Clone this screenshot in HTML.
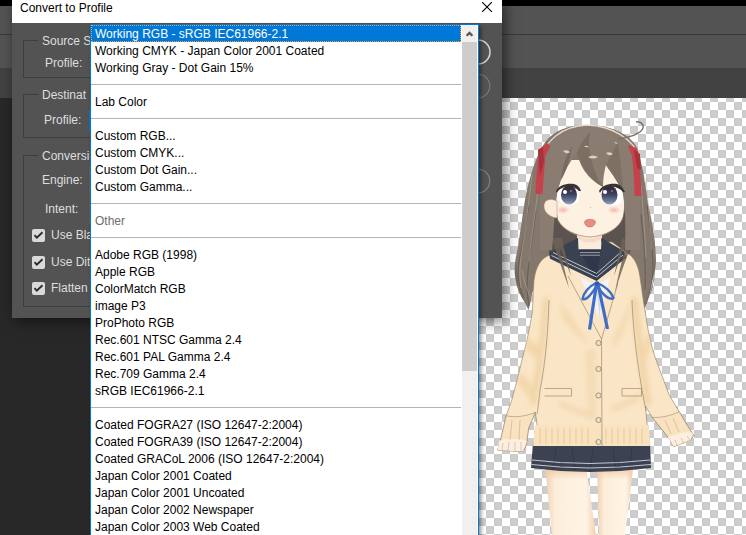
<!DOCTYPE html>
<html><head><meta charset="utf-8">
<style>
*{margin:0;padding:0;box-sizing:border-box}
html,body{width:746px;height:535px;overflow:hidden;background:#282828;font-family:"Liberation Sans",sans-serif}
.a{position:absolute}
#topblk{left:0;top:0;width:746px;height:6px;background:#000}
#bar1{left:0;top:6px;width:746px;height:28px;background:#535353}
#bar1l{left:0;top:34px;width:746px;height:1px;background:#393939}
#bar2{left:0;top:35px;width:746px;height:33px;background:#535353}
#bar3l{left:0;top:68px;width:12px;height:30px;background:#424242}
#bar3r{left:502px;top:68px;width:244px;height:30px;background:#424242}
#canvas{left:478px;top:98px;width:268px;height:437px;background:conic-gradient(#fff 25%,#ccc 0 50%,#fff 0 75%,#ccc 0) 32px 4px/16px 16px}
#dlg{left:12px;top:0;width:490px;height:318px;background:#535353;box-shadow:3px 3px 12px rgba(0,0,0,.55)}
#title{left:0;top:0;width:490px;height:23px;background:#fff}
#title span{position:absolute;left:8px;top:1px;font-size:12px;color:#000;white-space:pre}
.grp{position:absolute;border:1px solid #3e3e3e}
.lbl{position:absolute;font-size:12px;color:#dedede;white-space:pre}
.cb{position:absolute;width:13px;height:13px;background:#d9d9d9;border-radius:2px}
.cb svg{position:absolute;left:0;top:0}
#list{left:90px;top:24px;width:389px;height:520px;background:#fff;border:1px solid #0078d7;box-shadow:2px 2px 4px rgba(0,0,0,.45)}
.it{position:absolute;left:4px;height:17px;font-size:12px;line-height:17px;padding-top:1px;color:#000;white-space:pre}
.sep{position:absolute;left:0;width:370px;height:1px;background:#b4b4b4}
#hl{position:absolute;left:0;top:0;width:370px;height:17px;background:#0078d7}
#sb{position:absolute;left:371px;top:0;width:15px;height:520px;background:#f0f0f0}
#thumb{position:absolute;left:0;top:17px;width:15px;height:329px;background:#cdcdcd}
</style></head><body>
<div class="a" id="topblk"></div>
<div class="a" id="bar1"></div>
<div class="a" id="bar1l"></div>
<div class="a" id="bar2"></div>
<div class="a" id="bar3l"></div>
<div class="a" id="bar3r"></div>
<div class="a" id="canvas"></div>
<!--CHAR-->
<svg class="a" style="left:0;top:0" width="746" height="535" viewBox="0 0 746 535">
<defs>
 <linearGradient id="gEye" x1="0" y1="0" x2="0" y2="1"><stop offset="0" stop-color="#262838"/><stop offset="0.45" stop-color="#3a4058"/><stop offset="0.8" stop-color="#6a7898"/><stop offset="1" stop-color="#9aa8c8"/></linearGradient>
 <linearGradient id="gLeg" x1="0" x2="1"><stop offset="0" stop-color="#f0cfae"/><stop offset="0.2" stop-color="#fdeedb"/><stop offset="0.8" stop-color="#fef3e4"/><stop offset="1" stop-color="#f2d2b2"/></linearGradient>
 <linearGradient id="gLeg2" x1="0" y1="0" x2="0" y2="1"><stop offset="0" stop-color="#efc9a5" stop-opacity=".9"/><stop offset="1" stop-color="#efc9a5" stop-opacity="0"/></linearGradient>
 <clipPath id="cardClip"><path d="M550 255 C541 258 536 266 534 280 C533 295 533 305 532 314 C530 325 528 337 525.3 347 C522 360 519 372 516.9 381 C515 388 513 395 511.8 400 L506.2 415.7 L499.5 444.8 L497.8 450 L523 451.6 L526.4 444.8 L528.6 428 L535.4 412.3 L537 425 L533.7 444.7 L649.5 444.7 L646.7 420 L645.6 406.2 L652.3 417.4 L661.3 428.6 L670.3 439.9 L673.6 446.6 L690.5 439.9 L693.8 435.4 L687.1 425.3 L679.3 411.8 L669.2 395 L664 381 C658 365 654 355 652 347 C649 335 647 325 645.5 313.6 C643 300 642 290 640.4 280 C639 268 636 260 630 255 L612 242 L572 242 Z"/></clipPath>
 <filter id="blur3" x="-20%" y="-20%" width="140%" height="140%"><feGaussianBlur stdDeviation="2.5"/></filter>
 <radialGradient id="gBl"><stop offset="0" stop-color="#f4aaa8" stop-opacity=".85"/><stop offset="1" stop-color="#f4aaa8" stop-opacity="0"/></radialGradient>
</defs>
<!-- back hair / twin tails -->
<path d="M586 125 C568 125 554 131 546 141 C538 152 531 170 525 200 C523 212 522 220 521.8 222 C520 232 519 240 518.4 245 C517 252 515.5 258 515 263 C514.5 268 514.5 272 515 276 C516 282 517 286 518.4 289.5 C520 294 522 298 524 301 C526 305 527.5 308 528.5 310 C530 305 531 300 532 294 L540 270 L552 262 L575 250 L604 250 L628 262 L638 268 L640 281 L640 300 C642 304 644 307 645 308.5 C646 305 646.5 303 647 302 C649 295 651 288 652 281.6 C654 274 656 266 656 261 C656 254 655 246 654.8 241 C653 228 651 216 648.7 207.4 C647 195 645 184 643.6 173.7 C641 162 639 152 636 146 C628 133 610 125 586 125 Z" fill="#84786d"/>
<path d="M556 212 C558 225 566 232 578 236 L578 250 L552 262 L546 240 Z M624 210 C620 224 612 232 602 236 L602 250 L628 262 L633 238 Z" fill="#5a5350"/>
<path d="M529 205 C526 225 522 245 519 262 C517 275 519 288 524 298 M536 210 C533 235 528 262 527 285 C527 292 528 300 529 306 M647 205 C650 228 653 250 653 270 C652 285 649 296 646 304 M641 215 C644 240 646 265 645 290" stroke="#5e544b" stroke-width="1" fill="none" opacity=".75"/>
<path d="M532 175 C529 200 526 225 522 250 C520 262 519 275 521 288 M538 190 C535 215 531 240 529 262 M646 178 C648 200 650 225 652 250 M641 185 C643 210 645 235 646 258 M522 270 C524 282 528 292 532 300" stroke="#bcb0a2" stroke-width=".9" fill="none" opacity=".55"/>
<path d="M516 262 C514 275 516 288 522 298 C526 304 528 307 529 311 C525 300 519 292 518 280 Z M655 258 C656 272 654 288 648 300 C646 304 645 307 644 310 C649 298 653 286 654 272 Z" fill="#6e6359" opacity=".7"/>
<!-- legs -->
<path d="M545 466 L586 466 L596 535 L552 535 Z" fill="url(#gLeg)"/>
<path d="M597 466 L633 466 C631 490 628 512 625 535 L599 535 Z" fill="url(#gLeg)"/>
<path d="M545 468 L586 468 L588 480 L547 480 Z M597 468 L633 468 L632 480 L597 480 Z" fill="url(#gLeg2)"/>
<!-- skirt -->
<path d="M533 443 L650 443 L651 468 L620 471 L590 472 L560 471 L531 468 Z" fill="#3c4251"/>
<path d="M556 448 L553 470 M572 448 L575 471 M593 448 L590 472 M613 448 L616 471 M632 448 L630 469" stroke="#2c313d" stroke-width="1" fill="none" opacity=".6"/>
<path d="M532 460 L560 462.5 L590 463.5 L620 462.5 L650 460 M531.5 464.5 L560 467 L590 468 L620 467 L651 464.5" stroke="#c3c6cc" stroke-width="1.1" fill="none"/>
<!-- cardigan body + sleeves -->
<path d="M550 255 C541 258 536 266 534 280 C533 295 533 305 532 314 C530 325 528 337 525.3 347 C522 360 519 372 516.9 381 C515 388 513 395 511.8 400 L506.2 415.7 L499.5 444.8 L497.8 450 L523 451.6 L526.4 444.8 L528.6 428 L535.4 412.3 L537 425 L533.7 444.7 L649.5 444.7 L646.7 420 L645.6 406.2 L652.3 417.4 L661.3 428.6 L670.3 439.9 L673.6 446.6 L690.5 439.9 L693.8 435.4 L687.1 425.3 L679.3 411.8 L669.2 395 L664 381 C658 365 654 355 652 347 C649 335 647 325 645.5 313.6 C643 300 642 290 640.4 280 C639 268 636 260 630 255 L612 242 L572 242 Z" fill="#fae6c6" stroke="#8a7860" stroke-width=".6"/>
<!-- cardigan shading -->
<g clip-path="url(#cardClip)"><g filter="url(#blur3)" opacity=".65">
<path d="M549 295 C547 330 543 365 536 405 L530 405 C536 370 541 335 543 300 Z" fill="#ebc994"/>
<path d="M526 335 C530 340 538 345 542 350 L538 360 C532 355 527 350 524 347 Z" fill="#efcd9c"/>
<path d="M520 372 C526 378 534 388 537 396 L532 402 C527 394 520 386 517 382 Z" fill="#efcd9c"/>
<path d="M631 295 C634 330 639 365 645 405 L651 405 C646 370 641 335 638 300 Z" fill="#ebc994"/>
<path d="M650 330 C646 340 642 350 640 360 L646 362 C648 352 652 342 655 335 Z" fill="#efcd9c"/>
<path d="M560 300 C570 315 580 330 590 345 C582 342 572 330 562 318 Z M612 340 C620 325 626 312 630 300 C630 320 622 335 614 348 Z" fill="#f0d2a6"/>
<path d="M585 350 L596 350 L596 420 L588 420 Z" fill="#f2d6ad"/>
<path d="M560 400 C570 405 580 410 590 410 L590 418 C578 416 566 410 558 406 Z M612 405 C622 402 630 398 640 392 L640 400 C630 406 620 410 612 412 Z" fill="#f1d4aa"/>
</g>
</g>
<path d="M535 425 L649 425 L650 446 L533 446 Z" fill="#f9e2bd"/>
<path d="M540 428 v16 M546 428 v16 M552 428 v16 M558 428 v16 M564 428 v16 M570 428 v16 M576 428 v16 M582 428 v16 M588 428 v16 M606 428 v16 M612 428 v16 M618 428 v16 M624 428 v16 M630 428 v16 M636 428 v16 M642 428 v16" stroke="#d8b98a" stroke-width=".7" opacity=".8"/>
<path d="M506.2 415.7 C515 418 527 416 535.4 412.3 L528.6 428 L526.4 444.8 L523 451.6 L497.8 450 L499.5 444.8 Z" fill="#f9e2bf" stroke="#8a7860" stroke-width=".5"/>
<path d="M499 441 C505 438 520 438 527 441 L523 451.6 L497.8 450 Z" fill="#fcefe0"/>
<path d="M503 443 l-1 7 M509 442 l-1 9 M515 442 l0 9 M521 442 l0 9 M512 420 l-2 20 M520 420 l-1 20" stroke="#c8ab88" stroke-width=".6"/>
<path d="M679.3 411.8 C670 416 660 418 652.3 417.4 L661.3 428.6 L670.3 439.9 L673.6 446.6 L690.5 439.9 L693.8 435.4 L687.1 425.3 Z" fill="#f9e2bf" stroke="#8a7860" stroke-width=".5"/>
<path d="M668 437 C676 434 686 431 693 433 L690.5 439.9 L673.6 446.6 Z" fill="#fcefe0"/>
<path d="M675 440 l2 6 M681 438 l3 6 M687 436 l3 4 M665 420 l6 14 M673 418 l6 14" stroke="#c8ab88" stroke-width=".6"/>
<path d="M568 276 L601.5 339 M618 283 L601.5 339 L602 446 M549 300 C548 330 546 360 540 390 C539 400 538 408 537 414 M632 300 C633 330 637 360 642 390 L646 411" stroke="#8a7860" stroke-width=".6" fill="none"/>
<!-- neck -->
<path d="M578 226 L601 226 L601 250 L578 250 Z" fill="#fbecdc"/>
<path d="M577 234 C585 240 595 240 602 234 L602 238 C595 244 585 244 577 238 Z" fill="#f2dcc8"/>
<!-- collar -->
<path d="M578 238 L549 252.6 L550 258.8 L596.6 281 L626.4 257.8 L624.4 251.6 L601.7 238 L601 249.5 L578.5 249.5 Z" fill="#3a4151"/>
<path d="M578.5 249.5 L601 249.5 L596.6 281 Z" fill="#30374a"/>
<path d="M551.5 255.5 L596.6 277 L623 255 M553 252.5 L596.6 273.5 L620.5 252.5" stroke="#cfd2d8" stroke-width=".9" fill="none"/>
<path d="M580 252.6 L600 252.6 M580 255.2 L600 255.2" stroke="#b8bcc4" stroke-width=".8"/>
<path d="M580 277.3 L592 283 L601 283 L610 277.3 L599.7 318.5 Z" fill="#f3f3f7"/>
<path d="M596 285 L599.7 318.5 L601 300 Z" fill="#d6d9e2"/>
<!-- ribbon -->
<path d="M596 283 C590 286 584 292 582.5 299 C586 301 592 294 597 285 Z" fill="none" stroke="#3e6cc6" stroke-width="2.4" stroke-linejoin="round"/>
<path d="M597.5 283 C604 286 611 291 613.5 298 C609 301 602 294 597 285 Z" fill="none" stroke="#3e6cc6" stroke-width="2.4" stroke-linejoin="round"/>
<path d="M596.5 284 L589.5 329.5 M598 284 L607.5 329" stroke="#3e6cc6" stroke-width="3.2" fill="none"/>
<circle cx="597" cy="283.5" r="2.3" fill="#2f5aae"/>
<!-- hair strands over collar -->
<path d="M552 238 C556 252 561 266 569 288 C565 270 560 254 558 238 Z M556 238 C560 250 566 262 571 276 C568 262 564 250 562 238 Z M628 238 C624 254 619 270 615 292 C621 272 627 256 634 240 Z M622 238 C620 250 617 262 614 276 C619 262 623 250 627 240 Z" fill="#6f6257" opacity=".85"/>
<!-- face -->
<path d="M556 160 L624 160 C625 185 625 205 623 217 C620 228 606 236 590 237 C575 236 562 229 558 220 C556 210 555 185 556 160 Z" fill="#fdf2e2"/>
<path d="M623 217 C620 228 606 236 590 237 C575 236 562 229 558 220" stroke="#a08070" stroke-width=".7" fill="none"/>
<!-- front bangs -->
<path d="M540 162 C545 141 562 126 587 125 C612 126 632 138 640 160 L640 250 L625 250 C626 225 625 205 623 195 C620 184 612 174 606 165 C604 172 603 180 603 187 C586 178 580 165 577 153 C571 160 565 170 561 180 C558 188 556 198 555 210 C554 225 553 240 552 250 L540 250 Z" fill="#8a7c70"/>
<path d="M577 153 C580 145 584 138 590 132 C587 150 592 170 603 187 C588 178 581 166 577 153 Z" fill="#7b6f64"/>
<path d="M606 165 C610 157 614 150 618 142 C620 158 622 176 624 196 C620 184 612 174 606 165 Z" fill="#7d7065"/>
<path d="M561 180 C562 168 566 156 572 146 C570 160 566 172 561 180 Z" fill="#776a60"/>
<path d="M540 160 C545 141 562 126 587 125 C612 126 632 138 641 158" stroke="#e6dccd" stroke-width="1.3" fill="none"/>
<!-- highlights in hair -->
<path d="M563 151 q4 -2 7 1 q-3 3 -7 -1 Z M588 157 q5 -3 10 0 q-5 3 -10 0 Z M606 153 q4 -2 7 1 q-4 3 -7 -1 Z M584 146 q3 -1 5 1 q-3 1 -5 -1 Z M614 142 q3 0 4 2 q-3 0 -4 -2 Z" fill="#dccfbb"/>
<!-- ahoge -->
<path d="M618 139 C628 138 641 134 643 128 C644 124 640 121 636 122" stroke="#7a6d61" stroke-width="1.4" fill="none"/>
<!-- ribbons -->
<path d="M538 150 L548 143 L550 147 L545.5 155 C544.5 166 543.5 180 542.5 194 L535.5 194 C536 180 537 166 538.5 156 Z" fill="#c5424a"/>
<path d="M538 150 L543 147 L544 162 L540 176 Z" fill="#a8323a"/>
<path d="M627.5 145 L637 148 L639 155 C640 168 641 182 641.5 196 L634.5 196 C634.5 182 633.5 168 632 156 Z" fill="#c5424a"/>
<path d="M634 150 L640 154 L641 170 L637 168 Z" fill="#a8323a"/>
<!-- ear -->
<path d="M557 201 C551 198 544 199 544 206 C544 212 549 217 557 218 Z" fill="#fbebdb" stroke="#b08a70" stroke-width=".5"/>
<!-- eyes -->
<path d="M557 192 C558 186 566 184 572 185 C577 186 579 190 579 196 C579 202 576 205 569 205 C562 205 557 200 557 192 Z" fill="#fff"/>
<path d="M601 192 C602 186 608 184 614 185 C620 186 623 190 623 196 C623 202 620 205 613 205 C606 205 601 200 601 192 Z" fill="#fff"/>
<ellipse cx="569" cy="195" rx="8" ry="9.6" fill="url(#gEye)"/>
<ellipse cx="609.5" cy="195" rx="8" ry="9.6" fill="url(#gEye)"/>
<path d="M556 191 C559 185 567 183 574 184 C578 185 580 188 581 191 L579 191 C576 187 570 186 565 187 C561 188 558 190 557 193 Z" fill="#3b3230"/>
<path d="M599 191 C602 185 610 183 617 184 C621 185 623 188 625 192 L623 192 C620 188 614 186 609 187 C605 188 601 190 600 193 Z" fill="#3b3230"/>
<circle cx="565" cy="192" r="2" fill="#fff"/><circle cx="605" cy="192" r="2" fill="#fff"/>
<circle cx="571" cy="191" r=".9" fill="#e06070"/><circle cx="612" cy="191" r=".9" fill="#e06070"/>
<!-- blush -->
<ellipse cx="563" cy="210" rx="7" ry="4" fill="url(#gBl)"/>
<ellipse cx="614" cy="210" rx="7" ry="4" fill="url(#gBl)"/>
<circle cx="590.5" cy="207.5" r=".6" fill="#d8a890"/>
<!-- mouth -->
<path d="M584.5 222 C585 218.5 594 218.5 595.5 221.5 C595.5 225 592.5 227 590 227 C587 227 584.5 225 584.5 222 Z" fill="#ee8a84" stroke="#b0605c" stroke-width=".5"/>
<!-- buttons -->
<g fill="#ece0c4" stroke="#9a8a70" stroke-width=".9"><circle cx="598.5" cy="343" r="2.6"/><circle cx="598.5" cy="369" r="2.6"/><circle cx="598.5" cy="395.5" r="2.6"/><circle cx="598.5" cy="420" r="2.6"/><circle cx="598.5" cy="442" r="2.6"/></g>
<!-- pockets -->
<path d="M544.5 388.5 L571.5 388.5 L571.5 396 L544.5 396 M622 396 L622 388.5 L641.5 388.5 L641.5 396 L622 396" fill="none" stroke="#8c7c64" stroke-width=".6"/>
</svg>
<!--/CHAR-->

<div class="a" id="dlg">
 <div class="a" id="title"><span>Convert to Profile</span>
  <svg class="a" style="left:470px;top:2px" width="10" height="10"><path d="M0 0L10 10M10 0L0 10" stroke="#000" stroke-width="1.1"/></svg>
 </div>
 <div class="grp" style="left:11px;top:40px;width:440px;height:38px"></div>
 <div class="grp" style="left:11px;top:94px;width:440px;height:44px"></div>
 <div class="grp" style="left:11px;top:155px;width:440px;height:152px"></div>
 <div class="lbl" style="left:26px;top:34px;background:#535353;padding:0 4px">Source S</div>
 <div class="lbl" style="left:33px;top:56px">Profile:</div>
 <div class="lbl" style="left:26px;top:88px;background:#535353;padding:0 4px">Destinat</div>
 <div class="lbl" style="left:32px;top:113px">Profile:</div>
 <div class="lbl" style="left:26px;top:149px;background:#535353;padding:0 4px">Conversi</div>
 <div class="lbl" style="left:30px;top:173px">Engine:</div>
 <div class="lbl" style="left:33px;top:202px">Intent:</div>
 <svg class="a" style="left:440px;top:30px" width="60" height="180" viewBox="440 30 60 180"><circle cx="466" cy="52" r="12" fill="none" stroke="#d2d2d2" stroke-width="1.6"/><circle cx="466" cy="86" r="11.8" fill="none" stroke="#7c7c7c" stroke-width="1.1"/><circle cx="466" cy="181" r="11.8" fill="none" stroke="#858585" stroke-width="1.1"/></svg>
 <div class="a" style="left:77px;top:110px;width:1px;height:21px;background:#0a74d6"></div>
 <div class="a" style="left:77px;top:166px;width:1px;height:58px;background:#5e5e5e"></div>
 <div class="cb" style="left:20px;top:229px"><svg width="13" height="13"><path d="M2.5 6.2L4.8 8.6L10.5 3.2" fill="none" stroke="#2b2b2b" stroke-width="1.9"/></svg></div>
 <div class="cb" style="left:20px;top:256px"><svg width="13" height="13"><path d="M2.5 6.2L4.8 8.6L10.5 3.2" fill="none" stroke="#2b2b2b" stroke-width="1.9"/></svg></div>
 <div class="cb" style="left:20px;top:282px"><svg width="13" height="13"><path d="M2.5 6.2L4.8 8.6L10.5 3.2" fill="none" stroke="#2b2b2b" stroke-width="1.9"/></svg></div>
 <div class="lbl" style="left:39px;top:228px">Use Bla</div>
 <div class="lbl" style="left:39px;top:255px">Use Dit</div>
 <div class="lbl" style="left:39px;top:281px">Flatten</div>
</div>

<div class="a" id="list">
 <div id="hl"></div>
 <div style="position:absolute;left:0;top:0;width:370px;height:17px;border:1px dotted #f7a040"></div>
 <div class="it" style="top:0;color:#fff">Working RGB - sRGB IEC61966-2.1</div>
 <div class="it" style="top:17px">Working CMYK - Japan Color 2001 Coated</div>
 <div class="it" style="top:34px">Working Gray - Dot Gain 15%</div>
 <div class="sep" style="top:59px"></div>
 <div class="it" style="top:68px">Lab Color</div>
 <div class="sep" style="top:93px"></div>
 <div class="it" style="top:102px">Custom RGB...</div>
 <div class="it" style="top:119px">Custom CMYK...</div>
 <div class="it" style="top:136px">Custom Dot Gain...</div>
 <div class="it" style="top:153px">Custom Gamma...</div>
 <div class="sep" style="top:178px"></div>
 <div class="it" style="top:187px;color:#6d6d6d">Other</div>
 <div class="sep" style="top:212px"></div>
 <div class="it" style="top:221px">Adobe RGB (1998)</div>
 <div class="it" style="top:238px">Apple RGB</div>
 <div class="it" style="top:255px">ColorMatch RGB</div>
 <div class="it" style="top:272px">image P3</div>
 <div class="it" style="top:289px">ProPhoto RGB</div>
 <div class="it" style="top:306px">Rec.601 NTSC Gamma 2.4</div>
 <div class="it" style="top:323px">Rec.601 PAL Gamma 2.4</div>
 <div class="it" style="top:340px">Rec.709 Gamma 2.4</div>
 <div class="it" style="top:357px">sRGB IEC61966-2.1</div>
 <div class="sep" style="top:382px"></div>
 <div class="it" style="top:391px">Coated FOGRA27 (ISO 12647-2:2004)</div>
 <div class="it" style="top:408px">Coated FOGRA39 (ISO 12647-2:2004)</div>
 <div class="it" style="top:425px">Coated GRACoL 2006 (ISO 12647-2:2004)</div>
 <div class="it" style="top:442px">Japan Color 2001 Coated</div>
 <div class="it" style="top:459px">Japan Color 2001 Uncoated</div>
 <div class="it" style="top:476px">Japan Color 2002 Newspaper</div>
 <div class="it" style="top:493px">Japan Color 2003 Web Coated</div>
 <div id="sb">
  <svg style="position:absolute;left:3px;top:6px" width="9" height="7"><path d="M1.6 4.8L4.5 1.9L7.4 4.8" fill="none" stroke="#565656" stroke-width="2.3"/></svg>
  <div id="thumb"></div>
 </div>
</div>
</body></html>
